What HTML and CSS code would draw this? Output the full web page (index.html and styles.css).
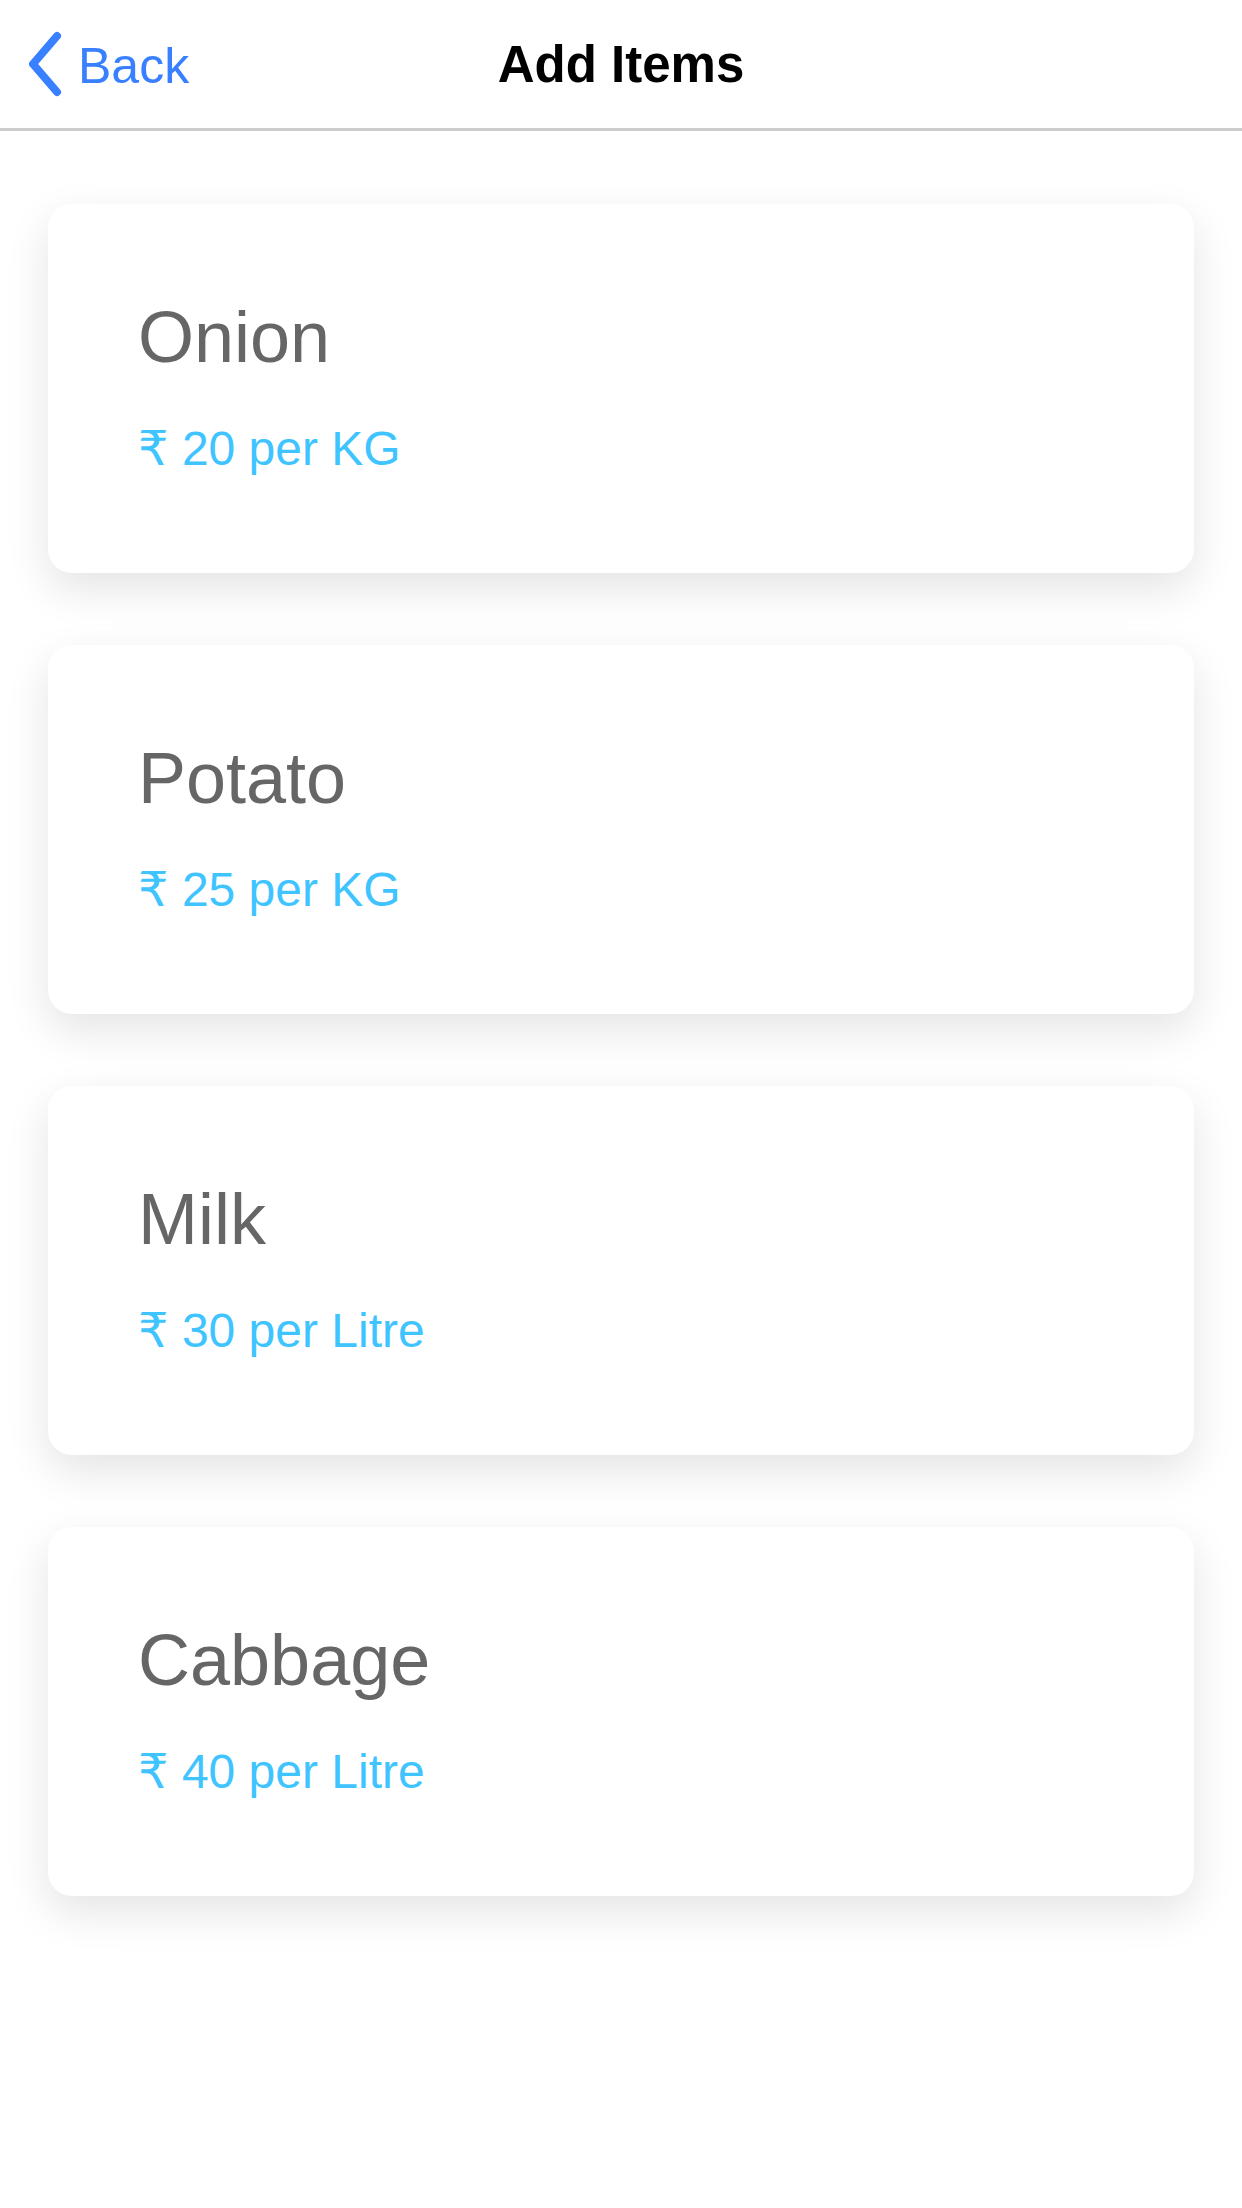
FILE: index.html
```html
<!DOCTYPE html>
<html>
<head>
<meta charset="utf-8">
<title>Add Items</title>
<link rel="stylesheet" href="styles.css">
</head>
<body>
  <header class="toolbar">
    <a class="back">
      <svg class="back-icon" width="40" height="72" viewBox="0 0 40 72">
        <path d="M30 8 L6 36 L30 64" fill="none" stroke="#3880ff" stroke-width="8" stroke-linecap="round" stroke-linejoin="round"/>
      </svg>
      <span class="back-text">Back</span>
    </a>
    <h1 class="title">Add Items</h1>
    <div class="spacer"></div>
  </header>
  <main class="list">
    <div class="card">
      <div class="name">Onion</div>
      <div class="price">₹ 20 per KG</div>
    </div>
    <div class="card">
      <div class="name">Potato</div>
      <div class="price">₹ 25 per KG</div>
    </div>
    <div class="card">
      <div class="name">Milk</div>
      <div class="price">₹ 30 per Litre</div>
    </div>
    <div class="card">
      <div class="name">Cabbage</div>
      <div class="price">₹ 40 per Litre</div>
    </div>
  </main>
</body>
</html>
```
FILE: styles.css
```css
html, body {
  margin: 0;
  padding: 0;
  background: #ffffff;
  font-family: "Liberation Sans", Arial, "DejaVu Sans", sans-serif;
}

body {
  min-height: 2208px;
}

.toolbar {
  display: grid;
  grid-template-columns: 1fr auto 1fr;
  align-items: center;
  height: 131px;
  padding: 4px 27px 0 27px;
  box-sizing: border-box;
  border-bottom: 3px solid #cccccc;
  background: #ffffff;
}

.back {
  display: flex;
  align-items: center;
  gap: 11px;
  color: #3880ff;
  text-decoration: none;
}

.back-icon {
  display: block;
  flex: none;
  margin-top: -4px;
}

.back-text {
  font-size: 50px;
  line-height: 50px;
}

.title {
  margin: 0;
  font-size: 51px;
  line-height: 50px;
  font-weight: bold;
  color: #000000;
  margin-top: -3px;
}

.list {
  display: flex;
  flex-direction: column;
  gap: 72px;
  padding: 73px 48px 200px 48px;
}

.card {
  background: #ffffff;
  border-radius: 24px;
  box-shadow: 0 16px 44px rgba(0, 0, 0, 0.11);
  padding: 97px 90px 100px 90px;
  display: flex;
  flex-direction: column;
  gap: 52px;
}

.name {
  font-size: 72px;
  line-height: 72px;
  color: #666666;
}

.price {
  font-size: 48px;
  line-height: 48px;
  color: #40c4ff;
}
```
